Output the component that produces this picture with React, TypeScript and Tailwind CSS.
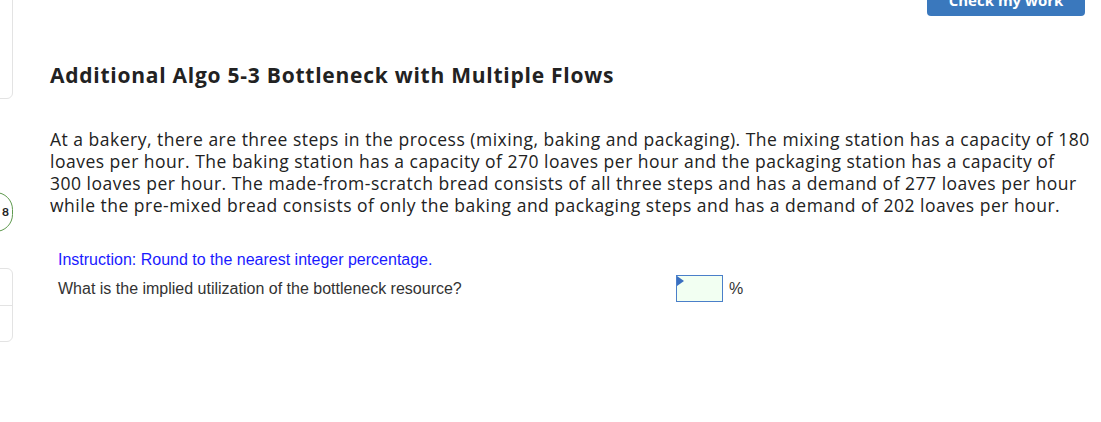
export default function App() {
  const lines = [
    'At a bakery, there are three steps in the process (mixing, baking and packaging). The mixing station has a capacity of 180',
    'loaves per hour. The baking station has a capacity of 270 loaves per hour and the packaging station has a capacity of',
    '300 loaves per hour. The made-from-scratch bread consists of all three steps and has a demand of 277 loaves per hour',
    'while the pre-mixed bread consists of only the baking and packaging steps and has a demand of 202 loaves per hour.',
  ]
  return (
    <div className="relative h-[422px] w-[1101px] overflow-hidden bg-white">
      {/* left rail fragments */}
      <div className="absolute left-[-40px] top-[-10px] h-[109px] w-[53px] rounded-md border border-[#e3e3e3] bg-white" />
      <div className="absolute left-[-22px] top-[192px] flex h-[40px] w-[35px] items-center justify-end rounded-full border border-[#5f9a4f] bg-white pr-[3px] text-[12px] font-bold text-[#222]" style={{ fontFamily: 'Lato, sans-serif' }}>
        8
      </div>
      <div className="absolute left-[-40px] top-[268px] flex h-[74px] w-[53px] flex-col rounded-md border border-[#e3e3e3] bg-white">
        <div className="h-[37px] border-b border-[#e3e3e3]" />
      </div>

      <div className="flex justify-end pr-[16px]">
        <button className="mt-[-20px] h-[36px] w-[158px] rounded-[4px] bg-[#3a78bd] pt-[4px] text-[15px] font-bold text-white" style={{ fontFamily: '"Open Sans", sans-serif' }}>
          Check my work
        </button>
      </div>

      <div className="pl-[50px]" style={{ fontFamily: '"Open Sans", "Noto Sans", sans-serif' }}>
        <h1 className="mt-[44px] text-[21px] font-bold leading-[30px] tracking-[0.75px] text-[#222]">
          Additional Algo 5-3 Bottleneck with Multiple Flows
        </h1>
        <div className="mt-[38px] text-[17.5px] leading-[22px] tracking-[0.5px] text-[#222]">
          {lines.map((l) => (
            <div key={l} className="whitespace-nowrap">{l}</div>
          ))}
        </div>
      </div>

      <div className="pl-[58px] text-[16px]" style={{ fontFamily: '"Liberation Sans", Arial, sans-serif' }}>
        <div className="mt-[34px] leading-[20px] text-[#1a1aff]">Instruction: Round to the nearest integer percentage.</div>
        <div className="mt-[5px] flex items-center">
          <span className="w-[618px] text-[#333]">What is the implied utilization of the bottleneck resource?</span>
          <span className="relative h-[27px] w-[47px] border border-[#4a7fc9] bg-[#f2fff2]">
            <span className="absolute left-0 top-0 h-0 w-0 border-y-[5px] border-l-[7px] border-y-transparent border-l-[#3a6fc0]" />
          </span>
          <span className="ml-[6px] text-[#333]">%</span>
        </div>
      </div>
    </div>
  )
}
